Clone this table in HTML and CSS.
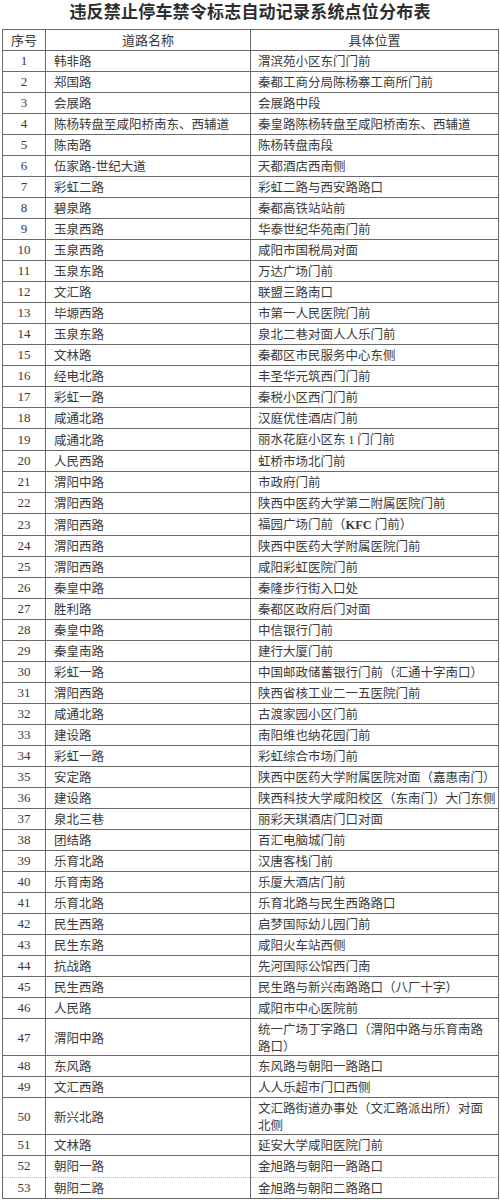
FILE: index.html
```html
<!DOCTYPE html>
<html lang="zh-CN">
<head>
<meta charset="utf-8">
<title>违反禁止停车禁令标志自动记录系统点位分布表</title>
<link rel="stylesheet" href="styles.css">
</head>
<body>
<h1 class="title">违反禁止停车禁令标志自动记录系统点位分布表</h1>
<table class="sheet">
<colgroup><col class="c-no"><col class="c-road"><col class="c-loc"></colgroup>
<thead>
<tr><th>序号</th><th>道路名称</th><th>具体位置</th></tr>
</thead>
<tbody>
<tr><td class="no">1</td><td>韩非路</td><td>渭滨苑小区东门门前</td></tr>
<tr><td class="no">2</td><td>郑国路</td><td>秦都工商分局陈杨寨工商所门前</td></tr>
<tr><td class="no">3</td><td>会展路</td><td>会展路中段</td></tr>
<tr><td class="no">4</td><td>陈杨转盘至咸阳桥南东、西辅道</td><td>秦皇路陈杨转盘至咸阳桥南东、西辅道</td></tr>
<tr><td class="no">5</td><td>陈南路</td><td>陈杨转盘南段</td></tr>
<tr><td class="no">6</td><td>伍家路-世纪大道</td><td>天都酒店西南侧</td></tr>
<tr><td class="no">7</td><td>彩虹二路</td><td>彩虹二路与西安路路口</td></tr>
<tr><td class="no">8</td><td>碧泉路</td><td>秦都高铁站站前</td></tr>
<tr><td class="no">9</td><td>玉泉西路</td><td>华泰世纪华苑南门前</td></tr>
<tr><td class="no">10</td><td>玉泉西路</td><td>咸阳市国税局对面</td></tr>
<tr><td class="no">11</td><td>玉泉东路</td><td>万达广场门前</td></tr>
<tr><td class="no">12</td><td>文汇路</td><td>联盟三路南口</td></tr>
<tr><td class="no">13</td><td>毕塬西路</td><td>市第一人民医院门前</td></tr>
<tr><td class="no">14</td><td>玉泉东路</td><td>泉北二巷对面人人乐门前</td></tr>
<tr><td class="no">15</td><td>文林路</td><td>秦都区市民服务中心东侧</td></tr>
<tr><td class="no">16</td><td>经电北路</td><td>丰圣华元筑西门门前</td></tr>
<tr><td class="no">17</td><td>彩虹一路</td><td>秦税小区西门门前</td></tr>
<tr><td class="no">18</td><td>咸通北路</td><td>汉庭优佳酒店门前</td></tr>
<tr><td class="no">19</td><td>咸通北路</td><td>丽水花庭小区东 <span class="num">1</span> 门门前</td></tr>
<tr><td class="no">20</td><td>人民西路</td><td>虹桥市场北门前</td></tr>
<tr><td class="no">21</td><td>渭阳中路</td><td>市政府门前</td></tr>
<tr><td class="no">22</td><td>渭阳西路</td><td>陕西中医药大学第二附属医院门前</td></tr>
<tr><td class="no">23</td><td>渭阳西路</td><td>福园广场门前（<b class="num">KFC</b> 门前）</td></tr>
<tr><td class="no">24</td><td>渭阳西路</td><td>陕西中医药大学附属医院门前</td></tr>
<tr><td class="no">25</td><td>渭阳西路</td><td>咸阳彩虹医院门前</td></tr>
<tr><td class="no">26</td><td>秦皇中路</td><td>秦隆步行街入口处</td></tr>
<tr><td class="no">27</td><td>胜利路</td><td>秦都区政府后门对面</td></tr>
<tr><td class="no">28</td><td>秦皇中路</td><td>中信银行门前</td></tr>
<tr><td class="no">29</td><td>秦皇南路</td><td>建行大厦门前</td></tr>
<tr><td class="no">30</td><td>彩虹一路</td><td>中国邮政储蓄银行门前（汇通十字南口）</td></tr>
<tr><td class="no">31</td><td>渭阳西路</td><td>陕西省核工业二一五医院门前</td></tr>
<tr><td class="no">32</td><td>咸通北路</td><td>古渡家园小区门前</td></tr>
<tr><td class="no">33</td><td>建设路</td><td>南阳维也纳花园门前</td></tr>
<tr><td class="no">34</td><td>彩虹一路</td><td>彩虹综合市场门前</td></tr>
<tr><td class="no">35</td><td>安定路</td><td>陕西中医药大学附属医院对面（嘉惠南门）</td></tr>
<tr><td class="no">36</td><td>建设路</td><td>陕西科技大学咸阳校区（东南门）大门东侧</td></tr>
<tr><td class="no">37</td><td>泉北三巷</td><td>丽彩天琪酒店门口对面</td></tr>
<tr><td class="no">38</td><td>团结路</td><td>百汇电脑城门前</td></tr>
<tr><td class="no">39</td><td>乐育北路</td><td>汉唐客栈门前</td></tr>
<tr><td class="no">40</td><td>乐育南路</td><td>乐厦大酒店门前</td></tr>
<tr><td class="no">41</td><td>乐育北路</td><td>乐育北路与民生西路路口</td></tr>
<tr><td class="no">42</td><td>民生西路</td><td>启梦国际幼儿园门前</td></tr>
<tr><td class="no">43</td><td>民生东路</td><td>咸阳火车站西侧</td></tr>
<tr><td class="no">44</td><td>抗战路</td><td>先河国际公馆西门南</td></tr>
<tr><td class="no">45</td><td>民生西路</td><td>民生路与新兴南路路口（八厂十字）</td></tr>
<tr><td class="no">46</td><td>人民路</td><td>咸阳市中心医院前</td></tr>
<tr class="two"><td class="no">47</td><td>渭阳中路</td><td>统一广场丁字路口（渭阳中路与乐育南路<br>路口）</td></tr>
<tr><td class="no">48</td><td>东风路</td><td>东风路与朝阳一路路口</td></tr>
<tr><td class="no">49</td><td>文汇西路</td><td>人人乐超市门口西侧</td></tr>
<tr class="two"><td class="no">50</td><td>新兴北路</td><td>文汇路街道办事处（文汇路派出所）对面<br>北侧</td></tr>
<tr><td class="no">51</td><td>文林路</td><td>延安大学咸阳医院门前</td></tr>
<tr class="cut"><td class="no">52</td><td>朝阳一路</td><td>金旭路与朝阳一路路口</td></tr>
<tr><td class="no">53</td><td>朝阳二路</td><td>金旭路与朝阳二路路口</td></tr>
</tbody>
</table>
</body>
</html>
```

FILE: styles.css
```css
html, body {
  margin: 0;
  padding: 0;
  background: #ffffff;
}

body {
  color: #333333;
  font-family: "Noto Sans CJK SC", "Noto Sans", sans-serif;
}

.title {
  margin: 0 0 8px 0;
  padding-top: 0;
  height: 21px;
  line-height: 21px;
  font-size: 17px;
  font-weight: 700;
  text-align: center;
  color: #2e2e2e;
  letter-spacing: 0.2px;
}

.sheet {
  margin-left: 2px;
  width: 497px;
  border-collapse: collapse;
  table-layout: fixed;
  border: 1px solid #555555;
}

.c-no { width: 43px; }
.c-road { width: 205px; }
.c-loc { width: auto; }

.sheet th,
.sheet td {
  border: 1px solid #6a6a6a;
  padding: 2px 2px 2px 7px;
  line-height: 16px;
  font-size: 12.5px;
  font-weight: 400;
  white-space: nowrap;
  vertical-align: middle;
  text-align: left;
  color: #3a3a3a;
  overflow: hidden;
}

.sheet th {
  text-align: center;
  padding-left: 2px;
  font-size: 13px;
}

.sheet td:nth-child(2) {
  padding-left: 8px;
}

.sheet td.no {
  text-align: center;
  padding-left: 2px;
  font-family: "Liberation Serif", "Noto Sans CJK SC", serif;
  font-size: 13px;
}

.sheet tr.two td {
  line-height: 17px;
  padding-top: 1px;
  padding-bottom: 1px;
}

.num {
  font-family: "Liberation Serif", serif;
}

b.num {
  font-weight: 700;
}

.sheet tr.cut td {
  border-bottom: 1px dotted #bdbdbd;
  padding-bottom: 3px;
}

.sheet tr.cut + tr td {
  border-top: 1px dotted #bdbdbd;
}
```
